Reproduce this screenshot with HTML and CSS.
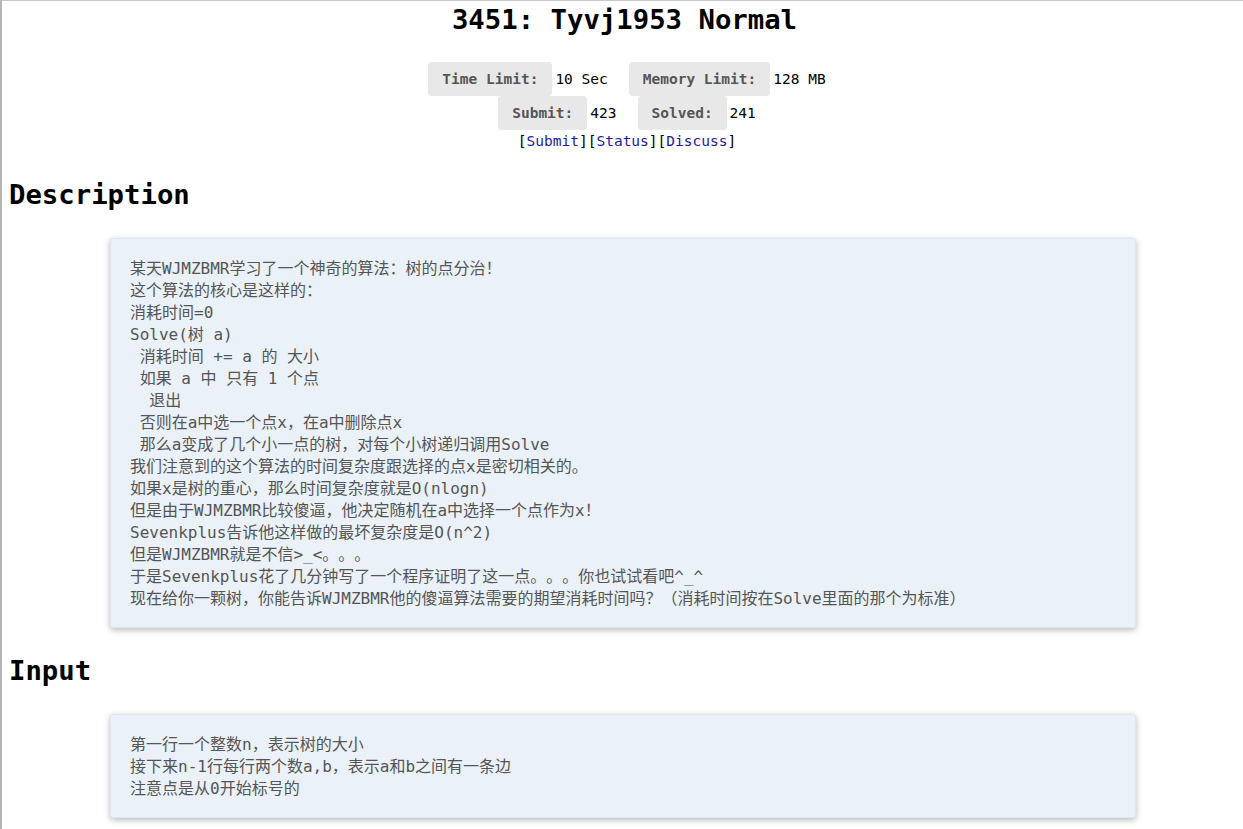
FILE: index.html
```html
<!DOCTYPE html>
<html lang="zh">
<head>
<meta charset="utf-8">
<title>3451: Tyvj1953 Normal</title>
<link rel="stylesheet" href="styles.css">
</head>
<body>
<div class="page">
  <h1 class="title">3451: Tyvj1953 Normal</h1>
  <div class="limits">
    <div class="row">
      <span class="label">Time Limit:</span><span class="value">10 Sec</span>
      <span class="label">Memory Limit:</span><span class="value">128 MB</span>
    </div>
    <div class="row">
      <span class="label">Submit:</span><span class="value">423</span>
      <span class="label">Solved:</span><span class="value">241</span>
    </div>
    <div class="links">[<a href="#">Submit</a>][<a href="#">Status</a>][<a href="#">Discuss</a>]</div>
  </div>

  <h2 class="section-title">Description</h2>
  <div class="content">某天WJMZBMR学习了一个神奇的算法：树的点分治！
这个算法的核心是这样的：
消耗时间=0
Solve(树 a)
 消耗时间 += a 的 大小
 如果 a 中 只有 1 个点
  退出
 否则在a中选一个点x，在a中删除点x
 那么a变成了几个小一点的树，对每个小树递归调用Solve
我们注意到的这个算法的时间复杂度跟选择的点x是密切相关的。
如果x是树的重心，那么时间复杂度就是O(nlogn)
但是由于WJMZBMR比较傻逼，他决定随机在a中选择一个点作为x！
Sevenkplus告诉他这样做的最坏复杂度是O(n^2)
但是WJMZBMR就是不信&gt;_&lt;。。。
于是Sevenkplus花了几分钟写了一个程序证明了这一点。。。你也试试看吧^_^
现在给你一颗树，你能告诉WJMZBMR他的傻逼算法需要的期望消耗时间吗？（消耗时间按在Solve里面的那个为标准）</div>

  <h2 class="section-title">Input</h2>
  <div class="content">第一行一个整数n，表示树的大小
接下来n-1行每行两个数a,b，表示a和b之间有一条边
注意点是从0开始标号的</div>
</div>
</body>
</html>
```

FILE: styles.css
```css
html, body {
  margin: 0;
  padding: 0;
  background: #fff;
}

body {
  font-family: "DejaVu Sans Mono", "Liberation Mono", "Noto Sans CJK SC", monospace;
  color: #000;
}

.page {
  border-top: 1px solid #c8c8c8;
  border-left: 2px solid #b4b4b4;
  padding: 0 2px 40px 6px;
  min-height: 828px;
  box-sizing: border-box;
}

.title {
  margin: 0;
  text-align: center;
  font-size: 27.3px;
  line-height: 38px;
  font-weight: bold;
}

.limits {
  margin-top: 23px;
  display: flex;
  flex-direction: column;
  align-items: center;
  font-size: 14.5px;
  padding-left: 5px;
}

.row {
  display: flex;
  align-items: center;
  justify-content: center;
}

.row + .row {
  margin-top: 0;
}

.label {
  display: inline-block;
  background: #e8e8e8;
  color: #555;
  font-weight: bold;
  padding: 0 14px;
  height: 34px;
  line-height: 35px;
  border-radius: 4px;
}

.value {
  margin-left: 3px;
  margin-right: 21px;
}

.row .value:last-child {
  margin-right: 0;
}

.links {
  line-height: 22px;
  margin-top: 0;
}

.links a {
  color: #1a1aa6;
  text-decoration: none;
}

.section-title {
  margin: 25px 0 25px 1px;
  font-size: 27.3px;
  line-height: 36px;
  font-weight: bold;
}

.content {
  margin-left: 102px;
  width: 1026px;
  box-sizing: border-box;
  background: #eaf1f8;
  border: 1px solid #dfe6ee;
  border-radius: 3px;
  box-shadow: 0 2px 6px rgba(0, 0, 0, 0.28);
  padding: 19px 19px 17px 19px;
  white-space: pre-wrap;
  font-family: "DejaVu Sans Mono", "Noto Sans CJK SC", monospace;
  font-size: 16px;
  line-height: 22px;
  color: #555;
  text-spacing-trim: space-all;
}
```
